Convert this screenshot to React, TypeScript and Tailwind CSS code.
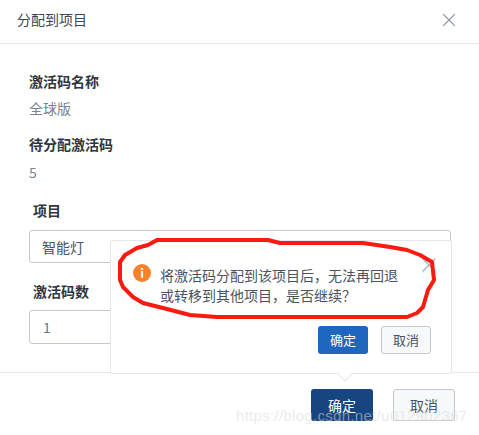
import { X } from 'lucide-react';

const FONT = "font-['Noto_Sans_CJK_SC','Noto_Sans',sans-serif]";

// hand-drawn red annotation around the popover message
const SCRIBBLE =
  'M120 262 L125 255 L137 248 L148 245 L157 240 L268 240 L280 243 L363 243 L390 247 L407 250 L420 255 L432 262 L434 280 L428 290 L423 307 L417 313 L407 317 L217 317 L190 315 L163 308 L143 303 L133 297 L123 287 L120 280 Z';

export default function App() {
  return (
    <div className={`relative w-[479px] h-[435px] overflow-hidden bg-white text-sm text-[#333] ${FONT}`}>
      {/* Header */}
      <div className="flex items-center justify-between h-[44px] pl-[17px] pr-[19px] border-b border-[#e8e8e8]">
        <span className="text-[#3c4654] leading-5 -mt-[6px]">分配到项目</span>
        <X className="w-[22px] h-[22px] -mt-[3px] text-[#8a97a6]" strokeWidth={1.2} />
      </div>

      {/* Body */}
      <div className="flex flex-col pl-[29px] pr-7 pt-[27px] h-[329px] border-b border-[#e8e8e8]">
        <div className="font-bold leading-5 text-[#2f3640]">激活码名称</div>
        <div className="mt-[7px] leading-5 text-[#7b838e]">全球版</div>
        <div className="mt-[16px] font-bold leading-5 text-[#2f3640]">待分配激活码</div>
        <div className="mt-[8px] leading-5 text-[#7b838e]">5</div>
        <div className="mt-[18px] pl-1 font-bold leading-5 text-[#2f3640]">项目</div>
        <div className="mt-[10px] flex items-center w-[422px] h-[33px] pl-[12px] border border-[#c5c8d0] rounded-[3px] text-[#4a5360]">
          智能灯
        </div>
        <div className="mt-[18px] pl-1 font-bold leading-5 text-[#2f3640]">激活码数</div>
        <div className="mt-[9px] flex items-center w-[150px] h-[34px] pl-[13px] border border-[#c5c8d0] rounded-[3px] text-[#6a7382]">
          1
        </div>
      </div>

      {/* Footer */}
      <div className="flex justify-end gap-5 pt-[16px] pr-6">
        <button className="w-[62px] h-[32px] rounded-[3px] bg-[#17457f] text-white">确定</button>
        <button className="w-[62px] h-[32px] rounded-[3px] border border-[#c5c8d0] bg-[#f7f8fa] text-[#4a5360]">取消</button>
      </div>

      {/* Popconfirm */}
      <div className="absolute left-[110px] top-[240px] w-[342px] h-[134px] bg-white border border-[#e4e6ea] rounded-[2px]">
        <div className="flex items-start gap-[9px] pl-[22px] pt-[23px] pr-3">
          <span className="flex items-center justify-center shrink-0 w-[18px] h-[18px] rounded-full bg-[#f98128] text-white text-xs font-bold leading-none">
            i
          </span>
          <p className="mt-[1px] leading-[20px] text-[#4a5360]">
            将激活码分配到该项目后，无法再回退
            <br />
            或转移到其他项目，是否继续？
          </p>
        </div>
        <X className="absolute right-[10px] top-[12px] w-6 h-6 text-[#a3acb8]" strokeWidth={1.2} />
        <div className="absolute right-[20px] bottom-[19px] flex gap-[13px] text-[13px]">
          <button className="w-[50px] h-[28px] rounded-[3px] bg-[#1f66c1] text-white">确定</button>
          <button className="w-[50px] h-[28px] rounded-[3px] border border-[#c5c8d0] bg-[#f7f8fa] text-[#4a5360]">取消</button>
        </div>
        {/* Arrow */}
        <div className="absolute left-[228px] -bottom-[6px] w-3 h-3 rotate-45 bg-white border-r border-b border-[#e4e6ea]" />
      </div>

      {/* Annotation */}
      <svg className="absolute inset-0 pointer-events-none" width="479" height="435" viewBox="0 0 479 435">
        <path d={SCRIBBLE} fill="none" stroke="#fb1a10" strokeWidth="4" strokeLinejoin="round" />
      </svg>

      {/* Watermark */}
      <span className="absolute left-[236px] top-[406px] text-[15px] leading-5 tracking-[0.3px] text-[#d8d8d88c] font-['Liberation_Sans',sans-serif] whitespace-nowrap">
        https://blog.csdn.net/u012902367
      </span>
    </div>
  );
}
